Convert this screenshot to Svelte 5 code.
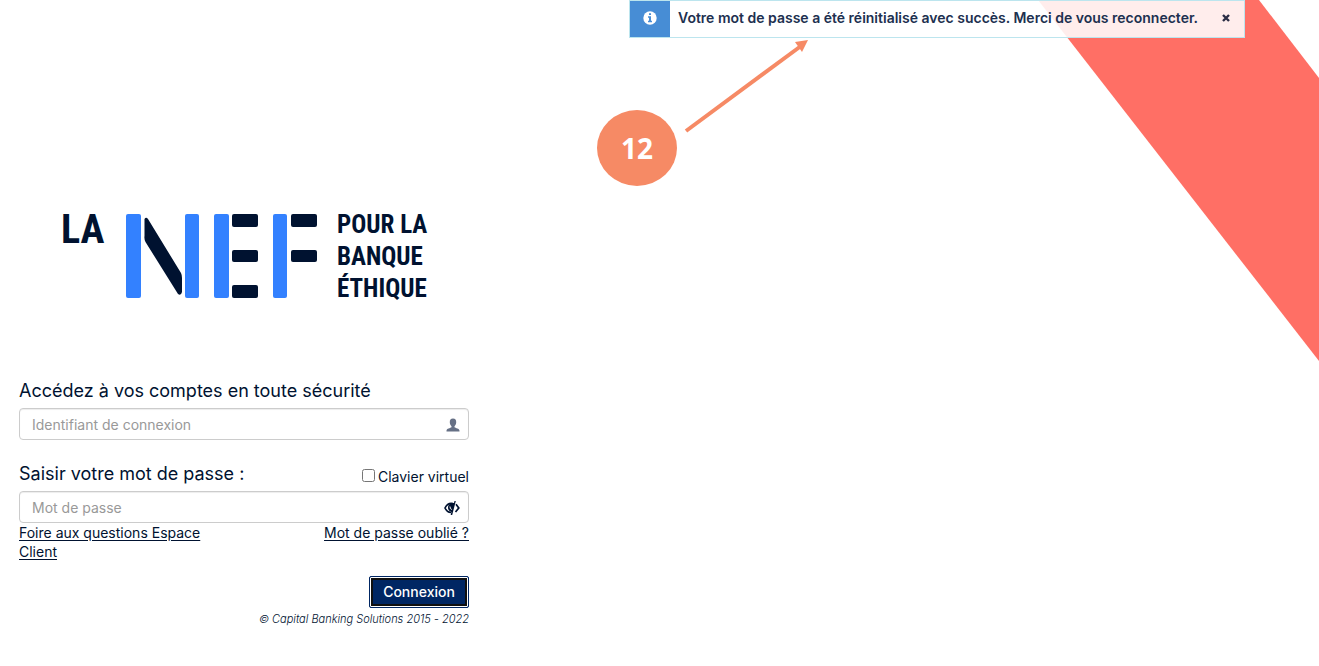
<script>
  let login = $state('');
  let password = $state('');
  let virtualKeyboard = $state(false);
  let noticeOpen = $state(true);
</script>

<div class="page">
  <svg class="ribbon" viewBox="0 0 279 361" aria-hidden="true">
    <path d="M-2 0H219L279 78V361Z" fill="#ff6f65" />
  </svg>

  {#if noticeOpen}
    <div class="notice" role="status">
      <span class="notice-icon">
        <svg viewBox="0 0 14 14" width="14" height="14" aria-hidden="true">
          <circle cx="7" cy="7" r="6.7" fill="#fff" />
          <path d="M6 2.2h2v1.9H6zM5 5.3h3v4.4h1v1.5H5V9.7h1V6.8H5z" fill="#478dd5" />
        </svg>
      </span>
      <p>Votre mot de passe a été réinitialisé avec succès. Merci de vous reconnecter.</p>
      <button class="close" type="button" aria-label="Fermer" onclick={() => (noticeOpen = false)}>
        <svg viewBox="0 0 8 8" width="8" height="8" aria-hidden="true">
          <path d="M1 1L7 7M7 1L1 7" stroke="#2b2d45" stroke-width="2.4" />
        </svg>
      </button>
    </div>
  {/if}

  <svg class="arrow" viewBox="0 0 126 94" width="126" height="94" aria-hidden="true">
    <path d="M3 91L118 6" stroke="#f68a65" stroke-width="4" fill="none" />
    <path d="M125 0L119 12L112 2Z" fill="#f68a65" />
  </svg>
  <div class="step">12</div>

  <main>
    <div class="logo">
      <span class="la">LA</span>
      <svg viewBox="0 0 192 84" width="192" height="84" aria-hidden="true">
        <g fill="#3381ff">
          <rect x="0" y="0" width="15" height="84" rx="2" />
          <rect x="59" y="0" width="14" height="84" rx="2" />
          <rect x="88" y="0" width="15" height="84" rx="2" />
          <rect x="147" y="0" width="14" height="84" rx="2" />
        </g>
        <g fill="#001230">
          <path d="M18.500 5Q20 2.500 22 5L55 59Q56 61 56 64V78Q55 82 52 80L19.500 28Q18 25 18.500 22Z" />
          <rect x="106" y="0" width="26" height="13" rx="2" />
          <rect x="106" y="36" width="26" height="12" rx="2" />
          <rect x="106" y="71" width="26" height="13" rx="2" />
          <rect x="165" y="0" width="26" height="13" rx="2" />
          <rect x="165" y="36" width="26" height="12" rx="2" />
        </g>
      </svg>
      <span class="motto">POUR LA<br />BANQUE<br />ÉTHIQUE</span>
    </div>

    <form onsubmit={(e) => e.preventDefault()}>
      <label class="title" for="login">Accédez à vos comptes en toute sécurité</label>
      <div class="field">
        <input id="login" type="text" placeholder="Identifiant de connexion" bind:value={login} />
        <svg viewBox="0 0 14 14" width="14" height="14" aria-hidden="true">
          <path d="M7 .5C9.300 .5 10.400 2 10.200 4.500C10.100 6.200 9.300 7.500 8.500 8.300V9.300C9.500 10.200 13.500 10.500 13.500 12.800V13.500H.5V12.800C.5 10.500 4.500 10.200 5.500 9.300V8.300C4.700 7.500 3.900 6.200 3.800 4.500C3.600 2 4.700 .5 7 .5Z" fill="#667085" />
        </svg>
      </div>

      <div class="heading">
        <label class="title" for="password">Saisir votre mot de passe :</label>
        <label class="check"><input type="checkbox" bind:checked={virtualKeyboard} />Clavier virtuel</label>
      </div>
      <div class="field">
        <input id="password" type="password" placeholder="Mot de passe" bind:value={password} />
        <svg class="eye" viewBox="0 0 16 14" width="16" height="14" aria-hidden="true">
          <path d="M9 2.500C5 1.700 2.400 4 1 7C2.200 9.700 4.300 11.400 7 11.500M12 3.300L14.800 7L11.500 11" fill="none" stroke="#001230" stroke-width="1.700" />
          <path d="M10.500 0H11.800L8.200 14H6.700L7.400 11C5.300 10.300 4 8.800 4 6.700C4 5 4.600 3.800 5.700 3Q8 1.500 10 2Z" fill="#001230" />
          <path d="M6 5.500Q5.800 8 7.800 8.500" fill="none" stroke="#fff" stroke-width="1" />
        </svg>
      </div>
      <div class="links">
        <a href="#faq">Foire aux questions Espace Client</a>
        <a href="#oubli">Mot de passe oublié ?</a>
      </div>
      <button class="submit" type="submit">Connexion</button>
    </form>
    <footer>© Capital Banking Solutions 2015 - 2022</footer>
  </main>
</div>

<style>
  :global(body) {
    margin: 0;
    background: #fff;
  }
  .page {
    position: relative;
    min-height: 100vh;
    box-sizing: border-box;
    overflow: hidden;
    padding: 208px 19px 0;
    color: #001230;
    font: 14px/19px Inter, "Work Sans", sans-serif;
  }
  .ribbon {
    position: absolute;
    top: 0;
    right: 0;
    width: 279px;
    overflow: visible;
  }
  .notice {
    position: absolute;
    top: 0;
    left: 629px;
    right: 74px;
    box-sizing: border-box;
    min-height: 38px;
    display: flex;
    align-items: stretch;
    border: 1px solid #bce5ee;
    background: rgba(255, 255, 255, 0.88);
    color: #20304f;
  }
  .notice-icon {
    flex: none;
    display: grid;
    place-items: center;
    width: 40px;
    padding-bottom: 2px;
    background: #478dd5;
  }
  .notice p {
    flex: 1;
    margin: 8px 0 8px 8px;
    font-size: 14px;
    font-weight: 600;
    line-height: 18px;
  }
  .close {
    flex: none;
    width: 36px;
    padding: 0 0 4px;
    border: 0;
    background: none;
    cursor: pointer;
  }
  .arrow {
    position: absolute;
    top: 40px;
    left: 683px;
  }
  .step {
    position: absolute;
    top: 110px;
    left: 597px;
    display: grid;
    place-items: center;
    width: 80px;
    height: 76px;
    border-radius: 50%;
    background: #f68a65;
    color: #fff;
    font: 700 28px/32px "Open Sans", sans-serif;
  }
  main {
    max-width: 450px;
  }
  .logo {
    display: flex;
    align-items: flex-start;
    padding-left: 42px;
    font-family: "Roboto Condensed", Roboto, sans-serif;
    font-weight: 700;
  }
  .logo svg {
    flex: none;
    margin: 6px 19px 0 0;
  }
  .la {
    flex: none;
    width: 65px;
    font-size: 40px;
    line-height: 44px;
  }
  .motto {
    padding-top: 1px;
    font-size: 25px;
    line-height: 32px;
    white-space: nowrap;
  }
  form {
    display: flex;
    flex-direction: column;
    margin-top: 74px;
  }
  .title {
    font-size: 18px;
    line-height: 24px;
  }
  .field {
    display: flex;
    align-items: center;
    box-sizing: border-box;
    height: 32px;
    margin-top: 5px;
    padding: 0 8px 0 12px;
    border: 1px solid #ccc;
    border-radius: 4px;
    box-shadow: inset 0 1px 1px rgba(0, 0, 0, 0.075);
  }
  .field input {
    flex: 1;
    min-width: 0;
    padding: 0;
    border: 0;
    outline: 0;
    background: none;
    color: inherit;
    font: inherit;
  }
  .field input::placeholder {
    color: #999;
    opacity: 1;
  }
  .field svg {
    margin-top: 2px;
  }
  .heading {
    display: flex;
    align-items: flex-end;
    justify-content: space-between;
    margin-top: 22px;
  }
  .check {
    display: flex;
    align-items: center;
    gap: 3px;
  }
  .check input {
    width: 13px;
    height: 13px;
    margin: 0 0 3px;
  }
  .links {
    display: flex;
    align-items: flex-start;
    justify-content: space-between;
  }
  .links a {
    max-width: 200px;
    color: inherit;
    text-decoration: underline;
    text-underline-offset: 2px;
  }
  .submit {
    align-self: flex-end;
    width: 100px;
    height: 32px;
    margin-top: 15px;
    padding: 0;
    border: 1px solid #002663;
    border-radius: 2px;
    outline: 2px solid #101010;
    outline-offset: -4px;
    box-shadow: inset 0 0 0 1px #fff;
    background: #002663;
    color: #fff;
    font: 500 14px/20px Inter, "Work Sans", sans-serif;
  }
  footer {
    margin-top: 3px;
    font-size: 11px;
    font-style: italic;
    font-weight: 300;
    line-height: 16px;
    text-align: right;
  }
</style>
